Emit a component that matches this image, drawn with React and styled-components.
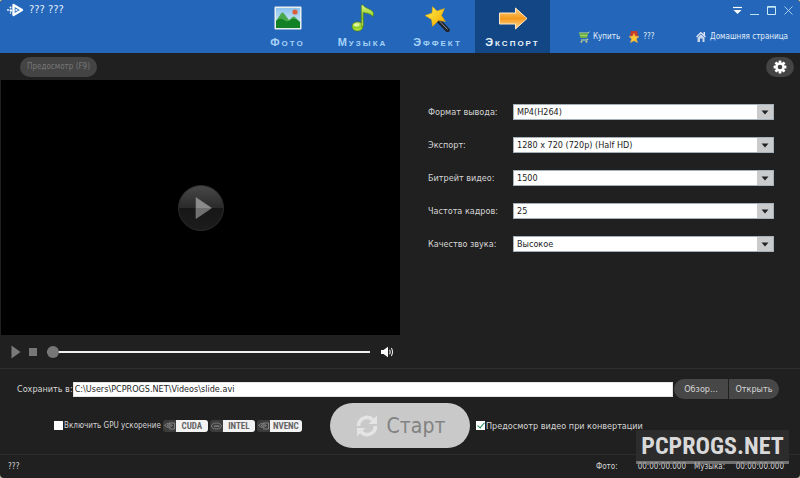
import React, { useState } from "react";
import styled, { createGlobalStyle, css } from "styled-components";

const GlobalStyle = createGlobalStyle`
  * {
    box-sizing: border-box;
  }

  body {
    margin: 0;
    background: #b9bf9f;
    font-family: "DejaVu Sans Condensed", "DejaVu Sans", sans-serif;
    font-size: 9px;
    line-height: 12px;
    color: #d6d6d6;
  }

  button,
  input,
  select {
    font: inherit;
    margin: 0;
  }
`;

const tabs = [
  { id: "photo", label: "Фото" },
  { id: "music", label: "Музыка" },
  { id: "effect", label: "Эффект" },
  { id: "export", label: "Экспорт" },
];

const settings = [
  { id: "format", label: "Формат вывода:", options: ["MP4(H264)", "AVI"] },
  {
    id: "size",
    label: "Экспорт:",
    options: ["1280 x 720 (720p) (Half HD)", "1920 x 1080 (1080p) (Full HD)"],
  },
  { id: "bitrate", label: "Битрейт видео:", options: ["1500", "3000"] },
  { id: "fps", label: "Частота кадров:", options: ["25", "30"] },
  { id: "sound", label: "Качество звука:", options: ["Высокое", "Среднее"] },
];

const PhotoIcon = () => (
  <svg width="28" height="28" viewBox="0 0 28 28">
    <defs>
      <linearGradient id="sky" x1="0" y1="0" x2="0" y2="1">
        <stop offset="0" stopColor="#8cc3ee" />
        <stop offset="1" stopColor="#e4f2f8" />
      </linearGradient>
    </defs>
    <rect x="0.5" y="2.5" width="27" height="23" rx="1" fill="#e9efee" />
    <rect x="2" y="4" width="24" height="20" fill="url(#sky)" />
    <path d="M2 17 L7 9.5 Q8.5 7.5 10 9.5 L15 16 L18.5 13 Q20 12 21.5 13.5 L26 18 V24 H2Z" fill="#4aa84c" />
    <path d="M2 17 Q6 13 10 16 Q14 19 18 15 Q22 14 26 18 V24 H2Z" fill="#128025" />
    <circle cx="21" cy="8" r="2.6" fill="#d9603a" />
  </svg>
);

const MusicIcon = () => (
  <svg width="28" height="28" viewBox="0 0 28 28">
    <defs>
      <linearGradient id="note" x1="0" y1="0" x2="0" y2="1">
        <stop offset="0" stopColor="#d9f27c" />
        <stop offset="0.6" stopColor="#8fce22" />
        <stop offset="1" stopColor="#c9ec4f" />
      </linearGradient>
    </defs>
    <ellipse cx="8.5" cy="22.5" rx="5.5" ry="4.6" fill="url(#note)" stroke="#4c7d0c" strokeWidth="0.7" />
    <path d="M12.3 22 V1 H14.3 C15 4.5 24.5 5 24.5 9.5 C24.5 11 24 12 23.5 13 C23 9.5 16.5 9 14.3 8.5 V22Z" fill="url(#note)" stroke="#4c7d0c" strokeWidth="0.6" />
    <ellipse cx="7.5" cy="21" rx="2.8" ry="1.6" fill="#effbb5" opacity="0.8" />
  </svg>
);

const EffectIcon = () => (
  <svg width="28" height="28" viewBox="0 0 28 28">
    <defs>
      <linearGradient id="star" x1="0" y1="0" x2="1" y2="1">
        <stop offset="0" stopColor="#fff24a" />
        <stop offset="1" stopColor="#f4a500" />
      </linearGradient>
    </defs>
    <path d="M14.5 16.5 L23.5 26" stroke="#20242c" strokeWidth="4.5" strokeLinecap="round" />
    <path d="M15.5 17 L23.5 25.5" stroke="#8b929c" strokeWidth="1" />
    <path d="M8.5 2.5 L13 7 L20.5 4.5 L17.5 11.5 L21.5 17.5 L14.5 16.5 L8.5 22.5 L7.5 15.5 L1 11.5 L8 9Z" fill="url(#star)" stroke="#e09a00" strokeWidth="0.5" />
  </svg>
);

const ExportIcon = () => (
  <svg width="30" height="28" viewBox="0 0 30 28">
    <defs>
      <linearGradient id="arrow" x1="0" y1="0" x2="0" y2="1">
        <stop offset="0" stopColor="#ffd28a" />
        <stop offset="0.5" stopColor="#f59a1c" />
        <stop offset="1" stopColor="#ffd9a0" />
      </linearGradient>
    </defs>
    <path d="M1.5 9 H17.5 V4 L29 14.5 L17.5 25 V20 H1.5Z" fill="url(#arrow)" stroke="#ffe9c6" strokeWidth="1" />
  </svg>
);

const tabIcons = {
  photo: <PhotoIcon />,
  music: <MusicIcon />,
  effect: <EffectIcon />,
  export: <ExportIcon />,
};

const LogoIcon = () => (
  <svg width="18" height="14" viewBox="0 0 18 14">
    <path d="M6.5 2 L15 7 L6.5 12Z" fill="none" stroke="#fff" strokeWidth="2.4" strokeLinejoin="round" />
    <path d="M8.5 5.5 L11 7 L8.5 8.5Z" fill="#fff" />
    <g fill="#fff">
      <circle cx="1" cy="7" r="0.9" />
      <circle cx="3.5" cy="4.5" r="1" />
      <circle cx="3.8" cy="7.5" r="1.2" />
      <circle cx="3.5" cy="10" r="0.8" />
    </g>
  </svg>
);

const CartIcon = () => (
  <svg width="12" height="12" viewBox="0 0 12 12">
    <path d="M1 2 H10 L11.5 0.8" stroke="#c9dca4" strokeWidth="1" fill="none" />
    <path d="M1 2 H10.3 L9 7 H2.5Z" fill="#6eb04c" />
    <path d="M2 4.5 H9.5" stroke="#b8d777" strokeWidth="0.8" />
    <path d="M3 9 H9 L10 8" stroke="#d4dfaf" strokeWidth="1.2" fill="none" />
    <circle cx="3.5" cy="10.8" r="1" fill="#d3c874" />
    <circle cx="8.5" cy="10.8" r="1" fill="#d3c874" />
  </svg>
);

const MedalIcon = () => (
  <svg width="12" height="12" viewBox="0 0 12 12">
    <path d="M3 0 H9 L10 4.5 L6 6 L2 4.5Z" fill="#c93d2b" />
    <path d="M6 2.5 L7.3 5.2 L11 5.5 L8.3 7.8 L9.5 11.5 L6 9.7 L2.5 11.5 L3.7 7.8 L1 5.5 L4.7 5.2Z" fill="#ffc933" stroke="#f0a94a" strokeWidth="0.6" />
  </svg>
);

const HomeIcon = () => (
  <svg width="12" height="12" viewBox="0 0 12 12">
    <path d="M1.5 6 L5.8 1.5 L10.5 6" stroke="#e8eef8" strokeWidth="1.1" fill="none" />
    <path d="M8.5 1 H10 V5 L8.5 3.5Z" fill="#e3e9f2" />
    <path d="M2.5 6.5 L5.8 3.2 L9.5 6.5 V11 H7.5 V7.5 H5 V11 H2.5Z" fill="#c9d5e8" />
  </svg>
);

const GearIcon = () => (
  <svg width="14" height="14" viewBox="-7 -7 14 14">
    <g fill="#fff">
      {[0, 45, 90, 135].map((a) => (
        <rect key={a} x="-1.4" y="-6.4" width="2.8" height="12.8" rx="0.5" transform={`rotate(${a})`} />
      ))}
      <circle r="4.6" />
    </g>
    <circle r="2.3" fill="#444" />
  </svg>
);

const SpeakerIcon = () => (
  <svg width="14" height="12" viewBox="0 0 14 12">
    <path d="M1 4 H3.5 L8 0.8 V11.2 L3.5 8 H1Z" fill="#fff" />
    <path d="M9.5 3.8 Q10.8 6 9.5 8.2 M11.3 2 Q13.8 6 11.3 10" stroke="#e8e8e8" strokeWidth="1.1" fill="none" />
  </svg>
);

const BigPlayIcon = () => (
  <svg width="46" height="46" viewBox="0 0 46 46">
    <defs>
      <linearGradient id="disc" x1="0" y1="0" x2="0" y2="1">
        <stop offset="0" stopColor="#484848" />
        <stop offset="0.5" stopColor="#2a2a2a" />
        <stop offset="0.51" stopColor="#171717" />
        <stop offset="1" stopColor="#1c1c1c" />
      </linearGradient>
      <linearGradient id="tri" x1="0" y1="0" x2="0" y2="1">
        <stop offset="0.5" stopColor="#8c8c8c" />
        <stop offset="0.51" stopColor="#707070" />
      </linearGradient>
    </defs>
    <circle cx="23" cy="23" r="22.5" fill="url(#disc)" stroke="#2c2c2c" strokeWidth="1" />
    <path d="M18 12.5 L33.5 23 L18 33.5Z" fill="url(#tri)" stroke="#808080" strokeWidth="0.6" strokeLinejoin="round" />
  </svg>
);

const RefreshIcon = () => (
  <svg width="24" height="24" viewBox="0 0 24 24">
    <g fill="none" stroke="#e4e4e4" strokeWidth="3.6">
      <path d="M3.5 12 A8.5 8.5 0 0 1 18 6" />
      <path d="M20.5 12 A8.5 8.5 0 0 1 6 18" />
    </g>
    <path d="M22 1.5 V10 H13.5Z M2 22.5 V14 H10.5Z" fill="#e4e4e4" />
  </svg>
);

const ChipIcon = ({ intel }) => (
  <svg width="13" height="12" viewBox="0 0 13 12">
    {intel ? (
      <g fill="none" stroke="#8a8a8a">
        <ellipse cx="6.5" cy="6" rx="5" ry="3" strokeWidth="0.8" />
        <path d="M4 6.2 H9.5" strokeWidth="1.2" />
      </g>
    ) : (
      <g fill="none" stroke="#8a8a8a" strokeWidth="0.9">
        <path d="M1.5 5.5 Q5 1.5 9.5 5.5 Q6 9.5 1.5 5.5Z" />
        <path d="M6 3 H11.5 V9 H6 M4 5.5 Q6 3.8 7.5 5.5 Q6 7.2 4 5.5" />
      </g>
    )}
  </svg>
);

const App = () => {
  const [activeTab, setActiveTab] = useState("export");
  const [path, setPath] = useState("C:\\Users\\PCPROGS.NET\\Videos\\slide.avi");

  return (
    <>
      <GlobalStyle />
      <Window>
        <Header>
          <Brand>
            <LogoIcon />
            ??? ???
          </Brand>
          <Tabs>
            {tabs.map((tab) => (
              <Tab
                key={tab.id}
                type="button"
                $active={tab.id === activeTab}
                onClick={() => setActiveTab(tab.id)}
              >
                {tabIcons[tab.id]}
                <span>{tab.label}</span>
              </Tab>
            ))}
          </Tabs>
          <HeaderSide>
            <WindowButtons>
              <WindowButton type="button" aria-label="Меню">
                <svg width="11" height="9" viewBox="0 0 11 9">
                  <path d="M1 1.5 H10" stroke="#fff" strokeWidth="1.2" />
                  <path d="M1.5 4 H9.5 L5.5 8Z" fill="#fff" />
                </svg>
              </WindowButton>
              <WindowButton type="button" aria-label="Свернуть">
                <svg width="11" height="9" viewBox="0 0 11 9">
                  <path d="M1 8.5 H10" stroke="#b9e3ee" />
                </svg>
              </WindowButton>
              <WindowButton type="button" aria-label="Развернуть">
                <svg width="11" height="9" viewBox="0 0 11 9">
                  <path d="M1.5 0.5 H9.5 V8.5 H1.5Z M1.5 1.2 H9.5" stroke="#c8ebf2" fill="none" />
                </svg>
              </WindowButton>
              <WindowButton type="button" aria-label="Закрыть">
                <svg width="11" height="9" viewBox="0 0 11 9">
                  <path d="M1.5 0.5 L9.5 8.5 M9.5 0.5 L1.5 8.5" stroke="#b9d9ee" strokeWidth="0.9" />
                </svg>
              </WindowButton>
            </WindowButtons>
            <Links>
              <HeaderLink href="#buy">
                <CartIcon />
                Купить
              </HeaderLink>
              <HeaderLink href="#register">
                <MedalIcon />
                ???
              </HeaderLink>
              <HeaderLink href="#home" $last>
                <HomeIcon />
                Домашняя страница
              </HeaderLink>
            </Links>
          </HeaderSide>
        </Header>

        <Toolbar>
          <PreviewButton type="button" disabled>
            Предосмотр (F9)
          </PreviewButton>
          <GearButton type="button" aria-label="Настройки">
            <GearIcon />
          </GearButton>
        </Toolbar>

        <Main>
          <Player>
            <Screen>
              <RoundButton type="button" aria-label="Воспроизвести">
                <BigPlayIcon />
              </RoundButton>
            </Screen>
            <Controls>
              <IconButton type="button" aria-label="Пуск">
                <svg width="10" height="14" viewBox="0 0 10 14">
                  <path d="M0.5 0.5 L9.5 7 L0.5 13.5Z" fill="#7a7a7a" />
                </svg>
              </IconButton>
              <IconButton type="button" aria-label="Стоп">
                <svg width="8" height="8" viewBox="0 0 8 8">
                  <rect width="8" height="8" fill="#777" />
                </svg>
              </IconButton>
              <Seek type="range" aria-label="Позиция" min="0" max="100" defaultValue="0" />
              <IconButton type="button" aria-label="Звук">
                <SpeakerIcon />
              </IconButton>
            </Controls>
          </Player>
          <Settings>
            {settings.map((item) => (
              <Field key={item.id}>
                <label htmlFor={item.id}>{item.label}</label>
                <SelectBox>
                  <Select id={item.id}>
                    {item.options.map((option) => (
                      <option key={option}>{option}</option>
                    ))}
                  </Select>
                  <Arrow>
                    <svg width="8" height="5" viewBox="0 0 8 5">
                      <path d="M0.5 0.5 H7.5 L4 4.5Z" fill="#222" />
                    </svg>
                  </Arrow>
                </SelectBox>
              </Field>
            ))}
          </Settings>
        </Main>

        <Output>
          <SaveRow>
            <label htmlFor="path">Сохранить в:</label>
            <PathInput id="path" value={path} onChange={(e) => setPath(e.target.value)} />
            <ButtonPair>
              <PairButton type="button">Обзор...</PairButton>
              <PairButton type="button">Открыть</PairButton>
            </ButtonPair>
          </SaveRow>
          <StartRow>
            <GpuGroup>
              <CheckLabel $small>
                <CheckBox type="checkbox" />
                Включить GPU ускорение
              </CheckLabel>
              <Badges>
                {["CUDA", "INTEL", "NVENC"].map((name) => (
                  <Badge key={name}>
                    <ChipIcon intel={name === "INTEL"} />
                    <BadgeName>{name}</BadgeName>
                  </Badge>
                ))}
              </Badges>
            </GpuGroup>
            <StartButton type="button">
              <RefreshIcon />
              Старт
            </StartButton>
            <CheckLabel>
              <CheckBox type="checkbox" defaultChecked />
              Предосмотр видео при конвертации
            </CheckLabel>
          </StartRow>
        </Output>

        <StatusBar>
          <Message>???</Message>
          <Stat>
            <span>Фото:</span>
            <span>00:00:00.000</span>
          </Stat>
          <Stat>
            <span>Музыка:</span>
            <span>00:00:00.000</span>
          </Stat>
          <Watermark>PCPROGS.NET</Watermark>
        </StatusBar>
      </Window>
    </>
  );
};

const plainButton = css`
  border: 0;
  padding: 0;
  background: none;
  color: inherit;
  display: flex;
  align-items: center;
  justify-content: center;
  cursor: pointer;
`;

const Window = styled.div`
  min-height: 100vh;
  display: flex;
  flex-direction: column;
  background: #202020;
  border-radius: 4px;
  overflow: hidden;
`;

const Header = styled.header`
  display: grid;
  grid-template-columns: 1fr auto 1fr;
  height: 53px;
  background: #2466b9;
  color: #e2eefb;
`;

const Brand = styled.div`
  display: flex;
  align-items: center;
  gap: 4px;
  height: 20px;
  padding-left: 7px;
  font-size: 11px;
`;

const Tabs = styled.nav`
  display: grid;
  grid-template-columns: repeat(4, 75px);
`;

const Tab = styled.button`
  ${plainButton}
  flex-direction: column;
  justify-content: flex-start;
  gap: 4px;
  padding-top: 4px;
  color: ${({ $active }) => ($active ? "#e6f1fb" : "#a5d2f7")};
  background: ${({ $active }) => ($active ? "#134685" : "transparent")};
  font-family: "Liberation Sans", Arial, sans-serif;
  font-size: 11px;
  font-weight: bold;
  font-variant: small-caps;
  letter-spacing: 2px;
`;

const HeaderSide = styled.div`
  display: flex;
  flex-direction: column;
  padding: 4px 6px 0 28px;
`;

const WindowButtons = styled.div`
  display: flex;
  justify-content: flex-end;
  gap: 6px;
`;

const WindowButton = styled.button`
  ${plainButton}
  width: 11px;
  height: 12px;
`;

const Links = styled.div`
  display: flex;
  gap: 8px;
  padding: 15px 6px 0 0;
`;

const HeaderLink = styled.a`
  display: flex;
  align-items: center;
  gap: 3px;
  color: inherit;
  font-size: 8px;
  text-decoration: none;
  white-space: nowrap;
  margin-left: ${({ $last }) => ($last ? "auto" : "0")};
`;

const Toolbar = styled.div`
  display: flex;
  align-items: center;
  justify-content: space-between;
  height: 27px;
  padding: 0 6px 0 20px;
`;

const PreviewButton = styled.button`
  ${plainButton}
  height: 20px;
  padding: 0 7px;
  border-radius: 10px;
  background: #444;
  color: #777;
  font-size: 8px;
`;

const GearButton = styled.button`
  ${plainButton}
  width: 28px;
  height: 20px;
  border-radius: 10px;
  background: #444;
`;

const Main = styled.main`
  display: grid;
  grid-template-columns: 1fr 1fr;
  border-bottom: 1px solid #303030;
`;

const Player = styled.section`
  padding-left: 1px;
`;

const Screen = styled.div`
  display: flex;
  align-items: center;
  justify-content: center;
  aspect-ratio: 399 / 255;
  background: #000;
`;

const RoundButton = styled.button`
  ${plainButton}
  border-radius: 50%;
`;

const Controls = styled.div`
  display: flex;
  align-items: center;
  gap: 8px;
  height: 33px;
  padding: 0 6px 0 10px;
`;

const IconButton = styled.button`
  ${plainButton}
`;

const Seek = styled.input`
  flex: 1;
  min-width: 0;
  height: 12px;
  margin: 0 2px;
  appearance: none;
  background: linear-gradient(#f0f0f0, #f0f0f0) center / 100% 2px no-repeat;

  &::-webkit-slider-thumb {
    appearance: none;
    width: 12px;
    height: 12px;
    border-radius: 50%;
    background: #777;
  }
`;

const Settings = styled.section`
  display: flex;
  flex-direction: column;
  gap: 17px;
  padding: 24px 26px 0 28px;
`;

const Field = styled.div`
  display: grid;
  grid-template-columns: 85px 1fr;
  align-items: center;
`;

const SelectBox = styled.div`
  display: grid;
  grid-template-columns: 1fr 16px;
  height: 16px;
  border: 1px solid #a6b0b8;
  background: #fff;
`;

const Select = styled.select`
  grid-area: 1 / 1 / 2 / 3;
  appearance: none;
  border: 0;
  padding: 0 3px;
  background: transparent;
  color: #1c1c1c;
`;

const Arrow = styled.span`
  grid-area: 1 / 2 / 2 / 3;
  display: flex;
  align-items: center;
  justify-content: center;
  background: #c9cbcd;
  pointer-events: none;
`;

const Output = styled.section`
  display: flex;
  flex-direction: column;
  gap: 4px;
  padding: 10px 21px 6px 17px;
  border-bottom: 1px solid #2c2c2c;
`;

const SaveRow = styled.div`
  display: flex;
  align-items: center;
`;

const PathInput = styled.input`
  flex: 1;
  min-width: 0;
  height: 15px;
  border: 1px solid #e4e4e4;
  border-radius: 0;
  padding: 0 1px;
  background: #fff;
  color: #1c1c1c;
`;

const ButtonPair = styled.div`
  display: grid;
  grid-template-columns: 54px 50px;
  gap: 1px;
  height: 20px;
  margin-left: 1px;
  border-radius: 10px;
  overflow: hidden;
`;

const PairButton = styled.button`
  ${plainButton}
  background: #474747;
`;

const StartRow = styled.div`
  display: flex;
  align-items: center;
  gap: 6px;
`;

const GpuGroup = styled.div`
  flex: 0 0 307px;
  display: flex;
  align-items: center;
  gap: 2px;
  padding-left: 37px;
`;

const CheckLabel = styled.label`
  display: flex;
  align-items: center;
  gap: 1px;
  font-size: ${({ $small }) => ($small ? "8px" : "9px")};
  white-space: nowrap;
`;

const CheckBox = styled.input`
  appearance: none;
  display: flex;
  width: 9px;
  height: 9px;
  background: #fff;

  &:checked::after {
    content: "";
    width: 3px;
    height: 6px;
    margin: 0 auto;
    border: solid #1f8a55;
    border-width: 0 1px 1px 0;
    transform: rotate(40deg);
  }
`;

const Badges = styled.div`
  display: flex;
  gap: 2px;
`;

const Badge = styled.span`
  display: grid;
  grid-template-columns: 13px 32px;
  height: 12px;
  border-radius: 3px;
  background: #3c3c3c;
  overflow: hidden;
`;

const BadgeName = styled.b`
  background: #f2f2f2;
  color: #666;
  font-family: "Roboto Condensed", Roboto, sans-serif;
  font-size: 9px;
  text-align: center;
`;

const StartButton = styled.button`
  ${plainButton}
  width: 140px;
  height: 45px;
  gap: 8px;
  border-radius: 23px;
  background: #c9c9c9;
  color: #828282;
  font-size: 21px;
`;

const StatusBar = styled.footer`
  position: relative;
  flex: 1;
  display: flex;
  align-items: center;
  gap: 8px;
  padding: 0 16px 0 8px;
  font-size: 8px;
`;

const Message = styled.span`
  flex: 1;
`;

const Stat = styled.span`
  display: flex;
  justify-content: space-between;
  width: 90px;
`;

const Watermark = styled.div`
  position: absolute;
  right: 11px;
  bottom: 14px;
  width: 153px;
  height: 34px;
  border-bottom: 3px solid rgba(150, 150, 150, 0.7);
  background: rgba(46, 46, 46, 0.9);
  background-clip: padding-box;
  color: #d9d9d9;
  font-family: "Roboto Condensed", "Liberation Sans Narrow", sans-serif;
  font-size: 24px;
  font-weight: bold;
  line-height: 32px;
  text-align: center;
`;

export default App;
